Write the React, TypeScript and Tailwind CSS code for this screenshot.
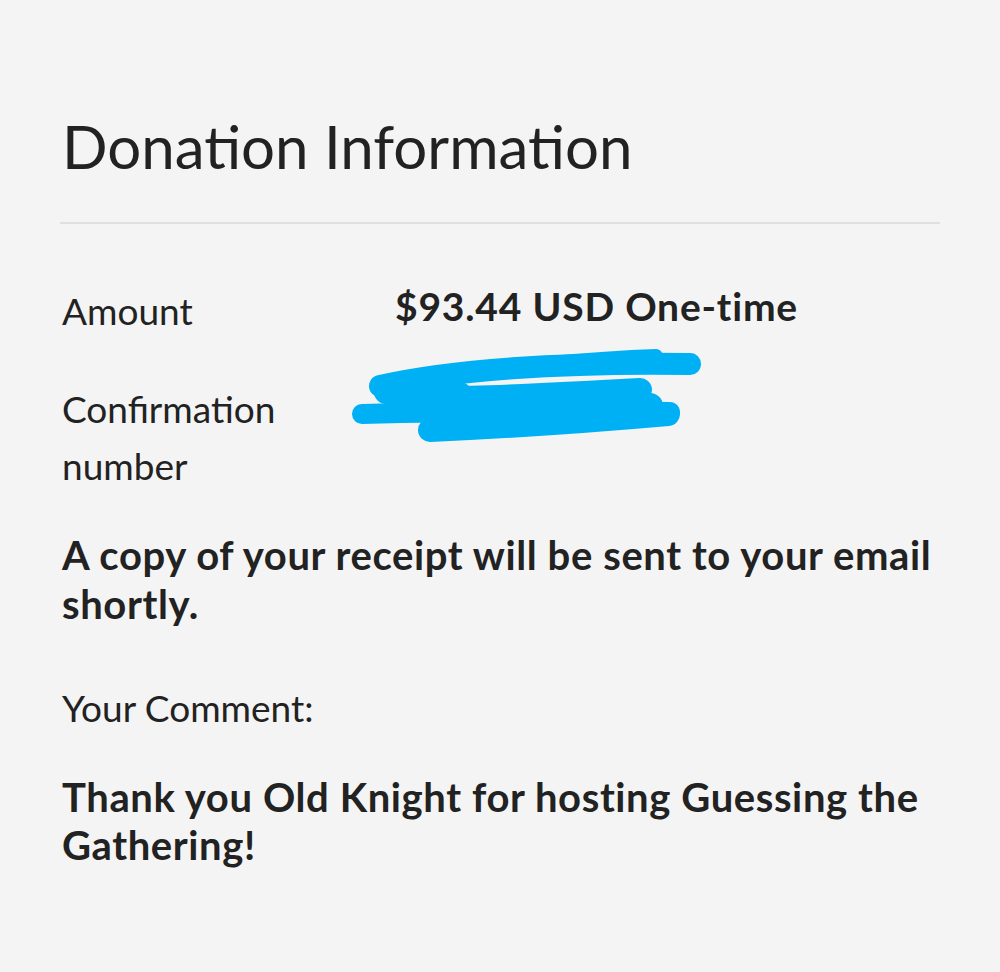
import React from 'react';

// hand-drawn blue redaction over the confirmation number
function Redaction() {
  return (
    <svg width="360" height="110" viewBox="0 0 360 110" className="absolute left-[-45px] top-[-32px]">
      <g fill="none" stroke="#00b0f5" strokeLinecap="round" strokeLinejoin="round">
        <path d="M30 38 C 100 22, 210 14, 340 16" strokeWidth="22" />
        <path d="M80 30 C 150 18, 250 10, 306 8" strokeWidth="14" />
        <path d="M36 44 C 60 48, 80 48, 110 46" strokeWidth="24" />
        <path d="M90 50 C 150 50, 220 46, 290 42" strokeWidth="24" />
        <path d="M80 62 C 150 62, 230 58, 300 58" strokeWidth="26" />
        <path d="M12 66 C 100 64, 210 62, 320 64" strokeWidth="20" />
        <path d="M80 82 C 170 78, 250 72, 318 66" strokeWidth="24" />
      </g>
    </svg>
  );
}

export default function App() {
  return (
    <div className="min-h-[972px] w-[1000px] bg-[#f4f4f4] text-[#222] font-['Lato','Liberation_Sans',sans-serif]">
      <div className="px-[60px] pt-[110px]">
        <h1 className="pl-[2px] text-[60px] leading-[72px] font-normal">Donation Information</h1>
        <div className="mt-[40px] h-[2px] bg-[#e0e0e0]" />

        {/* details */}
        <div className="mt-[63px] pl-[2px] grid grid-cols-[333px_1fr] text-[37px]">
          <div className="leading-[48px]">Amount</div>
          <div className="leading-[48px] font-bold text-[39px] tracking-[0.8px] -mt-[5px]">$93.44 USD One-time</div>
          <div className="mt-[45px] leading-[57px]">Confirmation<br />number</div>
          <div className="mt-[45px] relative">
            <Redaction />
          </div>
        </div>

        <p className="mt-[37px] pl-[2px] text-[40px] leading-[49px] font-bold tracking-[0.6px]">
          A copy of your receipt will be sent to your email shortly.
        </p>
        <p className="mt-[55px] pl-[2px] text-[37px] leading-[48px]">Your Comment:</p>
        <p className="mt-[41px] pl-[2px] text-[40px] leading-[48px] font-bold tracking-[0.6px]">
          Thank you Old Knight for hosting Guessing the Gathering!
        </p>
      </div>
    </div>
  );
}
